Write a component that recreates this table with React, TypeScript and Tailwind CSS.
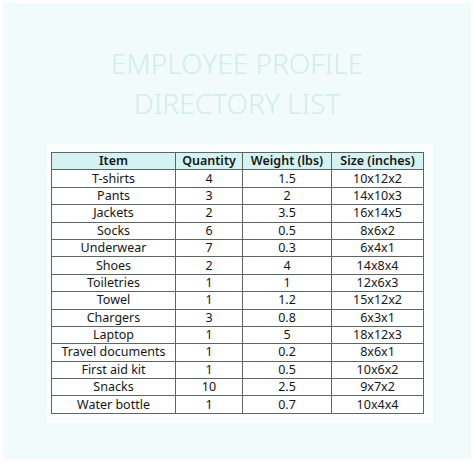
import React from 'react';

// packing list rows: item, qty, weight, size
const rows: [string, string, string, string][] = [
    ['T-shirts', '4', '1.5', '10x12x2'],
    ['Pants', '3', '2', '14x10x3'],
    ['Jackets', '2', '3.5', '16x14x5'],
    ['Socks', '6', '0.5', '8x6x2'],
    ['Underwear', '7', '0.3', '6x4x1'],
    ['Shoes', '2', '4', '14x8x4'],
    ['Toiletries', '1', '1', '12x6x3'],
    ['Towel', '1', '1.2', '15x12x2'],
    ['Chargers', '3', '0.8', '6x3x1'],
    ['Laptop', '1', '5', '18x12x3'],
    ['Travel documents', '1', '0.2', '8x6x1'],
    ['First aid kit', '1', '0.5', '10x6x2'],
    ['Snacks', '10', '2.5', '9x7x2'],
    ['Water bottle', '1', '0.7', '10x4x4'],
];

const headers = ['Item', 'Quantity', 'Weight (lbs)', 'Size (inches)'];

export default function App() {
    return (
        <div className="w-[474px] h-[462px] bg-white p-[3px] font-['Noto_Sans',sans-serif]">
            <div className="w-full h-full bg-[#f2fbfb] flex flex-col items-center">
                {/* Title */}
                <div className="pt-[40px] text-center text-[28px] leading-[40px] font-light text-[#d2ecec]">
                    <div>EMPLOYEE PROFILE</div>
                    <div>DIRECTORY LIST</div>
                </div>

                {/* Table card */}
                <div className="mt-[21px] self-start ml-[44px] bg-[#fbfefe] pl-[4px] pr-[9px] pt-[8px] pb-[9px]">
                    <table className="border-collapse text-[12.5px] text-[#161616] table-fixed w-[372px]">
                        <colgroup>
                            <col className="w-[124px]" />
                            <col className="w-[67px]" />
                            <col className="w-[89px]" />
                            <col className="w-[92px]" />
                        </colgroup>
                        <thead>
                            <tr className="h-[17.4px] bg-[#d4f2f2]">
                                {headers.map((h) => (
                                    <th key={h} className="border border-[#5f6464] p-0 font-semibold leading-[16px] text-center">
                                        {h}
                                    </th>
                                ))}
                            </tr>
                        </thead>
                        <tbody>
                            {rows.map((r) => (
                                <tr key={r[0]} className="h-[17.4px] bg-white">
                                    {r.map((c, i) => (
                                        <td key={i} className="border border-[#5f6464] p-0 leading-[16px] text-center">
                                            {c}
                                        </td>
                                    ))}
                                </tr>
                            ))}
                        </tbody>
                    </table>
                </div>
            </div>
        </div>
    );
}
